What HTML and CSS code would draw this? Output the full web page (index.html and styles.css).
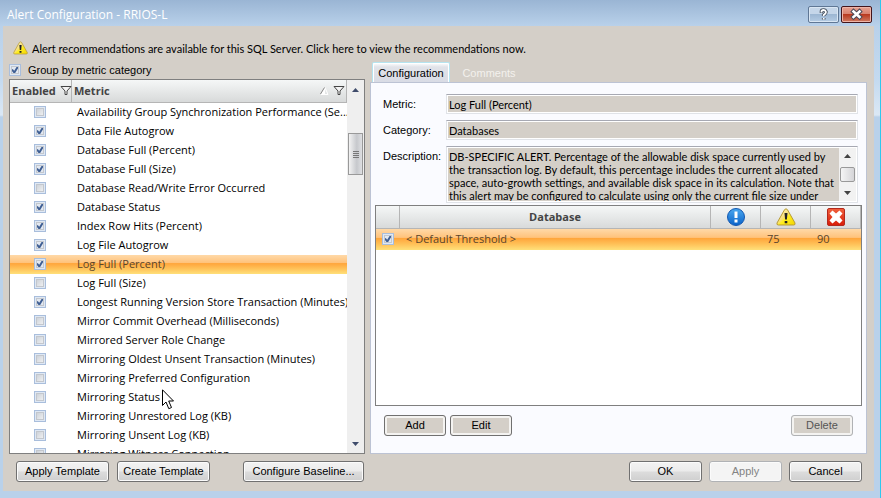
FILE: index.html
```html
<!DOCTYPE html>
<html lang="en">
<head>
<meta charset="utf-8">
<title>Alert Configuration - RRIOS-L</title>
<link rel="stylesheet" href="styles.css">
</head>
<body>
<svg class="defs" aria-hidden="true">
  <defs>
    <linearGradient id="yellow" x1="0" x2="1" y1="0" y2="1"><stop offset="0" stop-color="#fff9c8"/><stop offset=".45" stop-color="#f8e07a"/><stop offset=".55" stop-color="#ffee20"/><stop offset="1" stop-color="#f2d400"/></linearGradient>
    <linearGradient id="blue" x1="0" x2="0" y1="0" y2="1"><stop offset="0" stop-color="#4aa8f0"/><stop offset="1" stop-color="#0a62c8"/></linearGradient>
    <linearGradient id="red" x1="0" x2="0" y1="0" y2="1"><stop offset="0" stop-color="#f0603c"/><stop offset="1" stop-color="#d81c08"/></linearGradient>
    <symbol id="warning" viewBox="0 0 20 18">
      <path d="M8.6 1.6Q10 0 11.4 1.6L19 15Q19.6 17 17.6 17H2.4Q.4 17 1 15Z" fill="url(#yellow)" stroke="#b79b35"/>
      <path d="M8.5 5h3l-.6 6.500H9.100zM8.700 13h2.600v2.200H8.700z" fill="#222"/>
    </symbol>
    <symbol id="filter" viewBox="0 0 12 11">
      <path d="M1 1.500H11L7 6V9.500H5V6Z" fill="#f4f4f4" stroke="#444"/>
    </symbol>
  </defs>
</svg>
<div class="window">
  <header class="titlebar">
    <h1>Alert Configuration - RRIOS-L</h1>
    <button class="caption help" type="button" aria-label="Help"><svg viewBox="0 0 29 15"><path d="M12.500 6V4.500Q12.500 3 14.500 3T17 5Q17 6.500 14.700 8V9M14.700 11v1.500" fill="none" stroke="#46505e" stroke-width="3.600"/><path d="M12.500 5.500V4.500Q12.500 3 14.500 3T17 5Q17 6.500 14.700 8V9M14.700 11v1.500" fill="none" stroke="#fff" stroke-width="1.800"/></svg></button>
    <button class="caption close" type="button" aria-label="Close"><svg viewBox="0 0 29 15"><path d="M11.500 4.500L17.500 10M17.500 4.500L11.500 10" fill="none" stroke="#4c4a58" stroke-width="4.600" stroke-linecap="square"/><path d="M11.500 4.500L17.500 10M17.500 4.500L11.500 10" fill="none" stroke="#fff" stroke-width="2.600" stroke-linecap="square"/></svg></button>
  </header>
  <main class="client">
    <a class="notice" href="#"><svg class="notice-icon"><use href="#warning"/></svg>Alert recommendations are available for this SQL Server. Click here to view the recommendations now.</a>
    <div class="columns">
      <section class="metrics">
        <label class="group"><input type="checkbox" checked>Group by metric category</label>
        <div class="grid">
          <div class="grid-body">
            <table class="metric-table">
              <colgroup><col class="c-enabled"><col></colgroup>
              <thead><tr>
                <th><div class="head">Enabled<svg class="filter"><use href="#filter"/></svg></div></th>
                <th><div class="head">Metric<svg class="sort" viewBox="0 0 9 8"><path d="M1 7L5 .5V7Z" fill="#fff"/><path d="M1 7.500H8L5 .5" fill="none" stroke="#fff"/><path d="M.5 7L4.500 .5" stroke="#888"/></svg><svg class="filter"><use href="#filter"/></svg></div></th>
              </tr></thead>
              <tbody>
                <tr><td><input type="checkbox" id="m1"></td><td><label for="m1">Availability Group Synchronization Performance (Se...</label></td></tr>
                <tr><td><input type="checkbox" id="m2" checked></td><td><label for="m2">Data File Autogrow</label></td></tr>
                <tr><td><input type="checkbox" id="m3" checked></td><td><label for="m3">Database Full (Percent)</label></td></tr>
                <tr><td><input type="checkbox" id="m4" checked></td><td><label for="m4">Database Full (Size)</label></td></tr>
                <tr><td><input type="checkbox" id="m5"></td><td><label for="m5">Database Read/Write Error Occurred</label></td></tr>
                <tr><td><input type="checkbox" id="m6" checked></td><td><label for="m6">Database Status</label></td></tr>
                <tr><td><input type="checkbox" id="m7" checked></td><td><label for="m7">Index Row Hits (Percent)</label></td></tr>
                <tr><td><input type="checkbox" id="m8" checked></td><td><label for="m8">Log File Autogrow</label></td></tr>
                <tr class="selected"><td><input type="checkbox" id="m9" checked></td><td><label for="m9">Log Full (Percent)</label></td></tr>
                <tr><td><input type="checkbox" id="m10"></td><td><label for="m10">Log Full (Size)</label></td></tr>
                <tr><td><input type="checkbox" id="m11" checked></td><td><label for="m11">Longest Running Version Store Transaction (Minutes)</label></td></tr>
                <tr><td><input type="checkbox" id="m12"></td><td><label for="m12">Mirror Commit Overhead (Milliseconds)</label></td></tr>
                <tr><td><input type="checkbox" id="m13"></td><td><label for="m13">Mirrored Server Role Change</label></td></tr>
                <tr><td><input type="checkbox" id="m14"></td><td><label for="m14">Mirroring Oldest Unsent Transaction (Minutes)</label></td></tr>
                <tr><td><input type="checkbox" id="m15"></td><td><label for="m15">Mirroring Preferred Configuration</label></td></tr>
                <tr><td><input type="checkbox" id="m16"></td><td><label for="m16">Mirroring Status</label></td></tr>
                <tr><td><input type="checkbox" id="m17"></td><td><label for="m17">Mirroring Unrestored Log (KB)</label></td></tr>
                <tr><td><input type="checkbox" id="m18"></td><td><label for="m18">Mirroring Unsent Log (KB)</label></td></tr>
                <tr><td><input type="checkbox" id="m19"></td><td><label for="m19">Mirroring Witness Connection</label></td></tr>
              </tbody>
            </table>
          </div>
          <div class="scrollbar">
            <svg class="arrow" viewBox="0 0 7 4"><path d="M0 4L3.500 0L7 4Z"/></svg>
            <div class="thumb"><i></i><i></i><i></i><i></i></div>
            <svg class="arrow end" viewBox="0 0 7 4"><path d="M0 0L3.500 4L7 0Z"/></svg>
          </div>
        </div>
      </section>
      <section class="details">
        <div class="tabs" role="tablist">
          <button class="tab active" type="button" role="tab" aria-selected="true">Configuration</button>
          <button class="tab" type="button" role="tab" aria-selected="false">Comments</button>
        </div>
        <div class="panel">
          <div class="form">
            <label for="metric">Metric:</label><input id="metric" class="field" type="text" readonly value="Log Full (Percent)">
            <label for="category">Category:</label><input id="category" class="field" type="text" readonly value="Databases">
            <label for="description">Description:</label>
            <div class="field memo">
              <textarea id="description" readonly>DB-SPECIFIC ALERT. Percentage of the allowable disk space currently used by
the transaction log. By default, this percentage includes the current allocated
space, auto-growth settings, and available disk space in its calculation. Note that
this alert may be configured to calculate using only the current file size under</textarea>
              <div class="memo-scroll">
                <svg class="arrow" viewBox="0 0 7 4"><path d="M0 4L3.500 0L7 4Z"/></svg>
                <div class="memo-thumb"></div>
                <svg class="arrow" viewBox="0 0 7 4"><path d="M0 0L3.500 4L7 0Z"/></svg>
              </div>
            </div>
          </div>
          <div class="thresholds">
            <table class="threshold-table">
              <colgroup><col class="c-check"><col><col class="c-level"><col class="c-level"><col class="c-level"></colgroup>
              <thead><tr>
                <th></th><th>Database</th>
                <th><svg class="level" viewBox="0 0 18 18" role="img" aria-label="Informational"><circle cx="9" cy="9" r="8.500" fill="url(#blue)" stroke="#1458b0"/><path d="M7.500 3.500h3v6.500h-3zM7.500 11.500h3v3h-3z" fill="#fff"/></svg></th>
                <th><svg class="level wide" role="img" aria-label="Warning"><use href="#warning"/></svg></th>
                <th><svg class="level" viewBox="0 0 18 18" role="img" aria-label="Critical"><rect x=".5" y=".5" width="17" height="17" rx="1.500" fill="url(#red)" stroke="#b4281c"/><path d="M5.500 2.500L9 5.500L12.500 2.500L15.500 5.500L12.500 9L15.500 12.500L12.500 15.500L9 12.500L5.500 15.500L2.500 12.500L5.500 9L2.500 5.500Z" fill="#fff"/></svg></th>
              </tr></thead>
              <tbody><tr class="selected">
                <td><input type="checkbox" id="d1" checked></td><td><label for="d1">&lt; Default Threshold &gt;</label></td><td></td><td>75</td><td>90</td>
              </tr></tbody>
            </table>
          </div>
          <div class="actions">
            <button class="btn flat" type="button">Add</button>
            <button class="btn flat" type="button">Edit</button>
            <button class="btn flat push" type="button" disabled>Delete</button>
          </div>
        </div>
      </section>
    </div>
    <footer class="footer">
      <div class="footer-left">
        <button class="btn template" type="button">Apply Template</button>
        <button class="btn template" type="button">Create Template</button>
        <button class="btn baseline" type="button">Configure Baseline...</button>
      </div>
      <div class="footer-right">
        <button class="btn" type="button">OK</button>
        <button class="btn" type="button" disabled>Apply</button>
        <button class="btn" type="button">Cancel</button>
      </div>
    </footer>
  </main>
  <svg class="cursor" viewBox="0 0 12 21" aria-hidden="true"><path d="M.5 .8V16.500L4 13L6.800 19.700L9.500 18.500L6.700 12H11.500Z" fill="#fff" stroke="#000"/></svg>
</div>
</body>
</html>
```
FILE: styles.css
```css
* { box-sizing: border-box; }
body {
  margin: 0;
  color: #000;
  font: 11px/13px "Liberation Sans", Arial, sans-serif;
}
button, input, textarea { font: inherit; color: inherit; margin: 0; }
.defs { position: absolute; width: 0; height: 0; }

.window {
  position: relative;
  display: flex;
  flex-direction: column;
  height: 100vh;
  padding: 0 6px 7px 3px;
  border-right: 1px solid #2ec8ee;
  background: linear-gradient(#9ab5d4, #b9d1ea 26px, #c4daf0 80px, #dbe8f5 115px, #b9d1ea 117px);
}
.titlebar {
  display: flex;
  flex: none;
  height: 26px;
  padding: 6px 2px 0 4px;
}
.titlebar h1 {
  flex: 1;
  margin: 0;
  color: #fff;
  font: 12px/17px "Open Sans", "Noto Sans", sans-serif;
}
.caption {
  width: 31px;
  height: 17px;
  margin-left: 2px;
  padding: 0;
  border: 1px solid #5f7795;
  border-radius: 2px;
  background: linear-gradient(#c5d6e9 45%, #9db7d3 50%, #b5cce4);
  box-shadow: inset 0 0 0 1px #d9e6f3;
}
.caption svg { display: block; width: 29px; height: 15px; }
.close {
  border-color: #43151b;
  background: linear-gradient(#e8a191, #d98370 45%, #b93a20 50%, #cf7a62);
  box-shadow: inset 0 0 0 1px #eeb5a8;
}

.client {
  display: flex;
  flex: 1;
  flex-direction: column;
  min-height: 0;
  padding: 12px 7px 9px 6px;
  background: #d4cfc8;
}
.notice {
  display: flex;
  align-items: center;
  gap: 4px;
  height: 20px;
  padding-left: 4px;
  color: #000;
  font-family: Lato, "Liberation Sans", sans-serif;
  text-decoration: none;
}
.notice-icon { width: 15px; height: 14px; }
.columns {
  display: flex;
  flex: 1;
  gap: 5px;
  min-height: 0;
}
.metrics {
  display: flex;
  flex: 0 0 356px;
  flex-direction: column;
  padding-top: 4px;
}
.group {
  display: flex;
  align-items: center;
  gap: 7px;
  height: 17px;
  padding-bottom: 1px;
}

input[type="checkbox"] {
  display: block;
  appearance: none;
  width: 12px;
  height: 12px;
  border: 1px solid #a9bedc;
  background: linear-gradient(135deg, #c4cad2, #f8f8f8);
  box-shadow: inset 0 0 0 1px #dfe8f4, inset 0 0 0 2px #c3c7cd;
}
input[type="checkbox"]:checked {
  background: url("data:image/svg+xml,%3Csvg xmlns='http://www.w3.org/2000/svg' viewBox='0 0 10 10'%3E%3Cpath d='M2 4.500L4.300 7.500L8 1.500' fill='none' stroke='%233f5f94' stroke-width='2'/%3E%3C/svg%3E") center / 10px 10px no-repeat, #e2e8f1;
}

.grid {
  display: flex;
  flex: 1;
  min-height: 0;
  border: 1px solid #7f7f7f;
  background: #fff;
}
.grid-body { flex: 1; min-width: 0; overflow: hidden; }
table {
  width: 100%;
  border-collapse: separate;
  border-spacing: 0;
  table-layout: fixed;
  font: 11px/13px "Open Sans", "Noto Sans", sans-serif;
}
th, td { padding: 0; white-space: nowrap; }
th {
  height: 23px;
  padding-bottom: 1px;
  border-right: 1px solid #b5b5b5;
  border-bottom: 1px solid #b5b5b5;
  background: linear-gradient(#f5f7f7, #d8dada);
  color: #444;
  font-weight: bold;
}
td { height: 19px; padding-bottom: 2px; }
.c-enabled { width: 62px; }
.head {
  display: flex;
  align-items: center;
  gap: 4px;
  padding: 0 1px 0 2px;
}
.filter { flex: none; width: 12px; height: 11px; margin-left: auto; }
.sort { width: 9px; height: 8px; margin-left: auto; }
.sort + .filter { margin-left: 0; }
.metric-table td:first-child { padding-left: 24px; }
.metric-table td:last-child { padding-left: 5px; }
.selected td {
  background: linear-gradient(#ffd9a8, #ffc37c 40%, #ffa63c 45%, #ffbf56 70%, #ffe07a);
  color: #5a452c;
}
.scrollbar {
  display: flex;
  flex: 0 0 17px;
  flex-direction: column;
  align-items: center;
  padding: 8px 1px 7px;
  background: #efefef;
}
.arrow { display: block; flex: none; width: 7px; height: 4px; fill: #3f4c6b; }
.scrollbar .end { margin-top: auto; }
.thumb {
  display: flex;
  flex-direction: column;
  align-items: center;
  justify-content: center;
  gap: 1px;
  width: 15px;
  height: 42px;
  margin-top: 41px;
  border: 1px solid #999;
  background: linear-gradient(90deg, #f2f2f2, #c6c8cc 60%, #dedfe2);
}
.thumb i { width: 6px; height: 1px; background: #777; }

.details {
  display: flex;
  flex: 1;
  flex-direction: column;
  min-width: 0;
  padding-top: 4px;
}
.tabs { display: flex; height: 20px; padding-left: 2px; }
.tab {
  width: 78px;
  padding: 2px 0 0;
  border: 0;
  background: none;
  color: #f3f1ed;
}
.tab.active {
  border: 1px solid #b5e4f0;
  border-bottom: 0;
  border-radius: 2px 2px 0 0;
  background: linear-gradient(#fff, #e1e3e9 4px, #d9dce5);
  box-shadow: inset 1px 1px #fff, inset -1px 0 #fff;
  color: #000;
}
.panel {
  display: flex;
  flex: 1;
  flex-direction: column;
  min-height: 0;
  padding: 11px 4px 17px;
  border: 1px solid #bcc3d4;
  background: #fafbff;
}
.form {
  display: grid;
  grid-template-columns: 63px 1fr;
  row-gap: 6px;
  padding: 0 4px 0 8px;
}
.form label { padding-top: 4px; }
.field {
  width: 100%;
  height: 20px;
  padding: 0 2px;
  border: 1px solid #e0e3e8;
  border-top-color: #a7a9b3;
  border-radius: 0;
  outline: 0;
  background: #d4cfc8;
  box-shadow: inset 0 0 0 1px #fff;
  font-family: Lato, "Liberation Sans", sans-serif;
}
.memo { display: flex; height: 57px; padding: 1px; }
.memo textarea {
  flex: 1;
  min-width: 0;
  padding: 2px 1px 0;
  border: 0;
  outline: 0;
  resize: none;
  overflow: hidden;
  white-space: pre;
  background: #d4cfc8;
}
.memo-scroll {
  display: flex;
  flex: 0 0 17px;
  flex-direction: column;
  align-items: center;
  gap: 9px;
  padding-top: 6px;
  background: #f2f2f2;
}
.memo-thumb {
  width: 15px;
  height: 15px;
  border: 1px solid #999;
  border-radius: 2px;
  background: linear-gradient(90deg, #f5f5f5, #d5d5d8);
}
.memo-scroll .arrow { fill: #444; }

.thresholds {
  flex: 1;
  min-height: 0;
  margin-top: 2px;
  border: 1px solid #7f7f7f;
  background: #fff;
}
.c-check { width: 24px; }
.c-level { width: 50px; }
.threshold-table td { height: 21px; padding-left: 6px; }
.level { display: block; width: 18px; height: 18px; margin: auto; }
.level.wide { width: 20px; }
.actions {
  display: flex;
  gap: 4px;
  padding: 9px 9px 0;
}

.btn {
  width: 73px;
  height: 21px;
  padding: 0;
  border: 1px solid #707070;
  border-radius: 3px;
  background: linear-gradient(#f3f3f3, #ebebeb 48%, #dcdcdc 52%, #cfcfcf);
  box-shadow: inset 0 0 0 1px #fbfbfb;
  white-space: nowrap;
}
.btn:disabled {
  border-color: #b0b2b5;
  background: #f4f4f4;
  color: #838383;
}
.btn.flat {
  width: 62px;
  background: #d4cfc8;
  box-shadow: inset 0 0 0 2px #f4f3f1;
}
.btn.flat:disabled { color: #555; }
.push { margin-left: auto; }
.footer {
  display: flex;
  justify-content: space-between;
  padding: 7px 5px 0 7px;
}
.footer-left { display: flex; gap: 8px; }
.footer-right { display: flex; gap: 7px; }
.btn.template { width: 93px; }
.btn.baseline { width: 121px; margin-left: 25px; }

.cursor {
  position: absolute;
  left: 162px;
  top: 389px;
  width: 12px;
  height: 21px;
}
```
